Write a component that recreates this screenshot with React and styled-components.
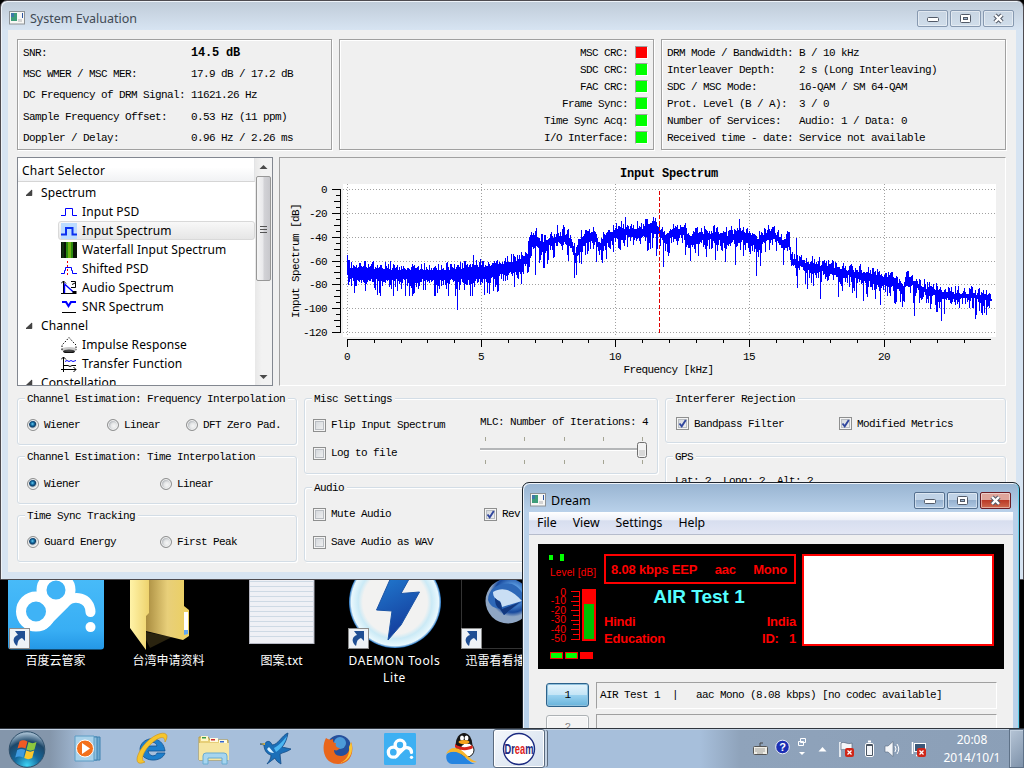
import React from 'react';
import styled, { createGlobalStyle, css } from 'styled-components';

const Global = createGlobalStyle`
  * { box-sizing: border-box; }
  html, body { margin: 0; padding: 0; background: #000; overflow: hidden; }
  svg { display: block; flex: none; }
  svg text { white-space: pre; }
`;

const mono = css`
  font-family: "Liberation Mono", "Noto Sans CJK SC", monospace;
  font-size: 11px;
  letter-spacing: -0.6px;
  white-space: pre;
  color: #000;
`;
const ui = css`
  font-family: "Noto Sans", "Noto Sans CJK SC", sans-serif;
  font-size: 12px;
  white-space: pre;
`;

const Desktop = styled.div`
  position: relative;
  width: 1024px;
  height: 768px;
  background: #000;
  overflow: hidden;
`;

/* ---------- window chrome ---------- */
const Win = styled.section`
  position: absolute;
  left: ${p => p.$x}px;
  top: ${p => p.$y}px;
  width: ${p => p.$w}px;
  height: ${p => p.$h}px;
  display: flex;
  flex-direction: column;
  border: 1px solid ${p => (p.$active ? '#20262e' : '#4e4b50')};
  border-radius: 7px 7px 0 0;
  padding: 0 ${p => (p.$active ? '6px 6px' : '7px 7px')};
  box-shadow: inset 1px 1px 0 #eef3f9${p => (p.$active ? ', inset -1px 0 0 #5fd3ee' : '')};
  background: ${p =>
    p.$active
      ? 'linear-gradient(#98b4d1 0, #b9d1ea 29px, #b9d1ea)'
      : 'linear-gradient(#bfcbd8 0, #d7e4f2 29px, #d7e4f2)'};
`;
const TitleBar = styled.header`
  ${ui}
  display: flex;
  align-items: center;
  flex: none;
  height: 29px;
  padding: 5px 0 0 1px;
  gap: 5px;
  font-size: 12.5px;
  color: ${p => (p.$active ? '#000' : '#414a54')};
`;
const TitleText = styled.span`
  flex: 1;
`;
const WinButtons = styled.div`
  display: flex;
  gap: 2px;
  padding-right: 2px;
`;
const WinButton = styled.div`
  width: 31px;
  height: 17px;
  border: 1px solid ${p => (p.$close ? '#6b1c24' : p.$active ? '#55708f' : '#8799b0')};
  border-radius: 2px;
  box-shadow: inset 0 0 0 1px rgba(255, 255, 255, 0.45);
  background: ${p =>
    p.$close
      ? 'linear-gradient(#dfa59b 0 45%, #bb3a26 50%, #cf6a4f)'
      : p.$active
      ? 'linear-gradient(#c0d3e7 0 45%, #96b1cf 50%, #b0c9e4)'
      : 'linear-gradient(#c8d5e3, #d0ddea)'};
  display: flex;
  align-items: center;
  justify-content: center;
`;
const AppIcon = () => (
  <svg width="16" height="14" viewBox="0 0 16 14">
    <rect x="0.5" y="0.5" width="15" height="12.5" fill="#f7f7f5" stroke="#8d9296" />
    <rect x="2" y="2" width="6" height="8" fill="#3e9d7a" />
    <rect x="2" y="2" width="3" height="4" fill="#3f78a8" />
    <rect x="13" y="2" width="1" height="5" fill="#2d55a0" />
    <rect x="9" y="8" width="4" height="3" fill="#d4d4d4" />
  </svg>
);
const Min = () => (
  <svg width="12" height="7" viewBox="0 0 12 7"><rect x="0.5" y="2.5" width="11" height="4" rx="1" fill="#fff" stroke="#525a68" /></svg>
);
const Max = () => (
  <svg width="11" height="9" viewBox="0 0 11 9"><rect x=".5" y=".5" width="10" height="8" rx="1" fill="#fff" stroke="#525a68" /><rect x="3.5" y="3.5" width="4" height="2" fill="#9db4cd" stroke="#525a68" /></svg>
);
const Close = () => (
  <svg width="13" height="11" viewBox="0 0 13 11">
    <path d="M3 2 10 9M10 2 3 9" stroke="#525a68" strokeWidth="4.4" />
    <path d="M3 2 10 9M10 2 3 9" stroke="#fff" strokeWidth="2.4" />
  </svg>
);
const Chrome = ({ title, active }) => (
  <TitleBar $active={active}>
    <AppIcon />
    <TitleText>{title}</TitleText>
    <WinButtons>
      <WinButton $active={active}><Min /></WinButton>
      <WinButton $active={active}><Max /></WinButton>
      <WinButton $active={active} $close={active}><Close /></WinButton>
    </WinButtons>
  </TitleBar>
);

/* ---------- evaluation window ---------- */
const Client = styled.main`
  flex: 1;
  min-height: 0;
  background: #f0f0f0;
  padding: 9px 10px 0 9px;
`;
const PanelRow = styled.div`
  display: grid;
  grid-template-columns: 315px 315px 1fr;
  gap: 7px;
  height: 111px;
`;
const Panel = styled.div`
  ${mono}
  border: 1px solid #a0a0a0;
  box-shadow: inset 1px 1px 0 #fff, 1px 1px 0 #fff;
  padding: ${p => p.$pad};
`;
const InfoRow = styled.div`
  display: grid;
  grid-template-columns: ${p => p.$label}px 1fr;
  align-items: center;
  height: ${p => p.$h}px;
`;
const Strong = styled.b`
  font-size: 12px;
  letter-spacing: -0.2px;
`;
const LedRow = styled.div`
  display: flex;
  justify-content: flex-end;
  align-items: center;
  gap: 7px;
  height: 17px;
`;
const Led = styled.i`
  width: 13px;
  height: 13px;
  border: 1px solid;
  border-color: #a0a0a0 #fff #fff #a0a0a0;
  background: ${p => (p.$bad ? '#f00' : '#0f0')};
`;

const MiddleRow = styled.div`
  display: grid;
  grid-template-columns: 256px 1fr;
  gap: 6px;
  height: 229px;
  margin-top: 7px;
`;
const Tree = styled.div`
  ${ui}
  letter-spacing: 0.1px;
  display: flex;
  min-height: 0;
  height: 229px;
  background: #fff;
  border: 1px solid #828790;
  overflow: hidden;
`;
const TreeBody = styled.div`
  flex: 1;
  min-width: 0;
`;
const TreeHeader = styled.div`
  height: 24px;
  line-height: 25px;
  padding-left: 4px;
  margin-bottom: 1px;
  letter-spacing: 0.25px;
  background: linear-gradient(#fff 40%, #f1f2f4);
  border-bottom: 1px solid #d5d5d5;
  border-right: 1px solid #e3e4e6;
`;
const Category = styled.div`
  height: 19px;
  display: flex;
  align-items: center;
  gap: 8px;
  padding-left: 7px;
`;
const Leaf = styled.div`
  height: 19px;
  margin-left: 40px;
  display: flex;
  align-items: center;
  gap: 5px;
  padding-left: 2px;
  border: 1px solid ${p => (p.$on ? '#d9d9d9' : 'transparent')};
  border-radius: 3px;
  background: ${p => (p.$on ? 'linear-gradient(#f8f8f8, #e6e6e6)' : 'none')};
`;
const ScrollBar = styled.div`
  width: 17px;
  background: linear-gradient(90deg, #e8e8e8, #f2f2f2 40%, #f2f2f2);
  display: flex;
  flex-direction: column;
  align-items: center;
`;
const Thumb = styled.div`
  width: 15px;
  height: 105px;
  margin: 0 0 auto;
  border: 1px solid #979797;
  border-radius: 2px;
  background: linear-gradient(90deg, #f5f5f5, #e9e9eb 45%, #d2d2d6 55%, #c8c8cc);
  display: flex;
  align-items: center;
  justify-content: center;
`;
const Arrow = ({ down }) => (
  <svg width="15" height="18" viewBox="0 0 15 18">
    <path d={down ? 'M3.5 8h8l-4 4z' : 'M3.5 11h8l-4-4z'} fill="#4a4a4a" />
  </svg>
);
const Triangle = () => (
  <svg width="8" height="8" viewBox="0 0 8 8"><path d="M6.8 1v5.5H1z" fill="#444" stroke="#222" strokeWidth=".7" /></svg>
);

const B = '#0000ff';
const leafIcons = {
  psd: <path d="M0 11.5H4.5V4.5H11.5V11.5H16" stroke={B} fill="none" />,
  input: (
    <>
      <rect width="16" height="16" fill="#bcdcff" />
      <path d="M0 11.500H5V5H11.5V11.500H16" stroke="#0a30f0" strokeWidth="2" fill="none" />
    </>
  ),
  waterfall: (
    <>
      <rect width="16" height="16" fill="#0a1408" />
      <rect x="1" width="2" height="16" fill="#123012" />
      <rect x="5" width="7" height="16" fill="#2c8a10" />
      <rect x="7" width="3" height="16" fill="#70b414" />
    </>
  ),
  shifted: (
    <>
      <path d="M0 12.5H3.500V9.500H4.500V6.500H10.500V9.500H11.500V12.500H16" stroke={B} fill="none" />
      <path d="M6.500 0V16" stroke="#e00" strokeDasharray="2 2" fill="none" />
    </>
  ),
  audio: (
    <>
      <path d="M2.5 14V1M0 3.500 2.500 1 5 3.500M0 13.500H15M10 1.500h4.500v6H10M11 4.500l4-2" stroke="#000" fill="none" />
      <path d="M3 3.500 14 13.500M3.500 5V13" stroke={B} strokeWidth="1.400" fill="none" />
      <path d="M11.500 11h4v3h-4z" fill="#000" />
    </>
  ),
  snr: (
    <>
      <path d="M1 3H5L7.500 7 10 3H15" stroke={B} strokeWidth="2.200" fill="none" />
      <path d="M1 13.500H15" stroke="#000" />
    </>
  ),
  impulse: (
    <>
      <ellipse cx="8" cy="14.500" rx="6" ry="2" fill="#111" />
      <ellipse cx="8" cy="12.500" rx="8" ry="2.500" fill="#888" opacity=".45" />
      <path d="M1 13V8L4 5 8 0.500 12 5 15 8V13" stroke="#000" strokeDasharray="1.500 1.500" fill="none" />
    </>
  ),
  transfer: (
    <>
      <path d="M2.500 16V1M0 3.500 2.500 1 5 3.500M0 13.500H15M12.500 11 15 13.500 12.500 16M3 9.500h4l2 1 2-1h4" stroke="#000" fill="none" />
      <path d="M4 5.500l2 -1 2 1 2-1 2 1 3-1" stroke={B} fill="none" />
    </>
  ),
};
const LeafIcon = ({ kind }) => (
  <svg width="16" height="16" viewBox="0 0 16 16">{leafIcons[kind]}</svg>
);

const ChartFrame = styled.div`
  height: 229px;
  border: 1px solid;
  border-color: #a0a0a0 #fff #fff #a0a0a0;
  overflow: hidden;
`;

/* ---------- spectrum trace ---------- */
const envelope = [
  [347, 258, 276], [349, 266, 280], [355, 267, 280], [375, 267, 281], [408, 268, 281], [441, 268, 281],
  [475, 266, 281], [492, 265, 279], [508, 261, 273], [520, 258, 270], [527, 252, 262],
  [529, 236, 252], [535, 233, 246], [540, 240, 252], [543, 240, 254], [549, 237, 247],
  [562, 233, 243], [570, 236, 247], [575, 251, 262], [580, 237, 251], [588, 230, 242], [595, 234, 244],
  [598, 244, 252], [603, 237, 247], [610, 231, 242], [615, 229, 239], [625, 227, 237], [640, 227, 240],
  [653, 221, 232], [659, 226, 237], [665, 234, 245], [673, 228, 237], [683, 227, 237], [690, 236, 246],
  [700, 232, 242], [713, 231, 241], [727, 234, 244], [740, 229, 240], [757, 237, 247], [770, 230, 240],
  [777, 234, 242], [783, 241, 250], [786, 235, 245], [789, 234, 249], [791, 256, 264], [803, 261, 269],
  [827, 264, 274], [847, 269, 277], [873, 272, 284], [893, 278, 288], [903, 284, 291], [906, 272, 285], [912, 279, 287],
  [927, 287, 295], [950, 292, 300], [973, 292, 300], [992, 297, 302],
];
const spikes = {
  347: [255, 275], 354: [266, 293], 377: [265, 295], 434: [267, 296], 435: [266, 296], 457: [265, 310], 473: [255, 283],
  487: [266, 293], 498: [264, 291], 535: [231, 275], 557: [225, 246], 563: [225, 245], 574: [243, 278], 625: [217, 240],
  656: [222, 256], 663: [232, 267], 690: [236, 261], 715: [232, 260], 725: [232, 262], 735: [230, 265], 739: [219, 243],
  756: [236, 276], 760: [235, 266], 796: [238, 276], 797: [255, 288], 807: [262, 289], 820: [266, 299], 838: [267, 297],
  856: [270, 298], 863: [272, 301], 880: [275, 305], 902: [284, 307], 914: [281, 316], 941: [290, 321], 975: [290, 319],
  982: [293, 315],
};
function trace() {
  let seed = 7331;
  const rnd = () => {
    seed = (seed * 1103515245 + 12345) % 2147483648;
    return seed / 2147483648;
  };
  let k = 0;
  let d = '';
  for (let x = 347; x < 992; x++) {
    while (k < envelope.length - 2 && x >= envelope[k + 1][0]) k++;
    const [x0, a0, b0] = envelope[k];
    const [x1, a1, b1] = envelope[k + 1];
    const t = (x - x0) / (x1 - x0);
    const up = rnd();
    const down = rnd();
    let top = Math.round(a0 + (a1 - a0) * t + 2.5 - up * 6 - up * up * up * 3);
    let bottom = Math.round(b0 + (b1 - b0) * t - 2 + Math.min(17, -Math.log(1 - down * 0.98) * 6.2));
    if (spikes[x]) [top, bottom] = spikes[x];
    d += `M${x + 0.5} ${top}V${bottom}`;
  }
  return d;
}
const spectrumPath = trace();
const kx = k => Math.round(347 + k * 26.83) + 0.5;
const dy = v => Math.round(189 - v * 1.192) + 0.5;
const range = n => Array.from({ length: n }, (_, i) => i);

const ChartLabel = styled.text`
  font-family: "Liberation Mono", monospace;
  font-size: ${p => (p.$title ? 12 : 11)}px;
  font-weight: ${p => (p.$title ? 700 : 400)};
  letter-spacing: ${p => (p.$title ? -0.2 : -0.6)}px;
  fill: #000;
`;

const SpectrumChart = () => (
  <svg width="725" height="227" viewBox="280 158 725 227" shapeRendering="crispEdges">
    <rect x="343" y="184" width="653" height="153" fill="#fff" />
    <g stroke="#a0a0a0" strokeDasharray="1 2">
      {range(7).map(i => <path key={i} d={`M343 ${dy(-20 * i)}H996`} />)}
      {range(5).map(i => <path key={i} d={`M${kx(5 * i)} 184V337`} />)}
    </g>
    <path d={spectrumPath} stroke="#0000ff" fill="none" />
    <path d="M659.500 191V333" stroke="#e00000" strokeDasharray="4 2" />
    <g stroke="#000">
      <path d="M340.500 189V333M347 339.500H991" />
      {range(25).map(i => (
        <path key={i} d={`M${i % 4 === 0 ? 332 : i % 2 === 0 ? 334 : 336} ${dy(-5 * i)}H341`} />
      ))}
      {range(24).map(i => <path key={i} d={`M${kx(i)} 339V${i % 5 === 0 ? 347 : 343}`} />)}
    </g>
    {range(7).map(i => (
      <ChartLabel key={i} x="327" y={dy(-20 * i) + 3} textAnchor="end">{String(-20 * i)}</ChartLabel>
    ))}
    {range(5).map(i => (
      <ChartLabel key={i} x={kx(5 * i) - 0.5} y="360" textAnchor="middle">{5 * i}</ChartLabel>
    ))}
    <ChartLabel $title x="669" y="177" textAnchor="middle">Input Spectrum</ChartLabel>
    <ChartLabel x="668.500" y="373" textAnchor="middle">Frequency [kHz]</ChartLabel>
    <ChartLabel transform="translate(299 261) rotate(-90)" textAnchor="middle">Input Spectrum [dB]</ChartLabel>
  </svg>
);

/* ---------- settings groups ---------- */
const SettingsRow = styled.div`
  display: grid;
  grid-template-columns: 280px 354px 1fr;
  gap: 7px;
  margin-top: 12px;
  height: 164px;
`;
const Column = styled.div`
  display: flex;
  flex-direction: column;
  gap: ${p => p.$gap}px;
`;
const Group = styled.div`
  ${mono}
  height: ${p => p.$h}px;
  flex: none;
  border: 1px solid #d3dde6;
  border-radius: 3px;
  box-shadow: inset 1px 1px 0 #fff, 1px 1px 0 #fff;
`;
const Legend = styled.div`
  width: max-content;
  height: 14px;
  line-height: 14px;
  margin: -7px 0 0 7px;
  padding: 0 3px 0 2px;
  background: #f0f0f0;
`;
const Options = styled.div`
  display: grid;
  grid-template-columns: ${p => p.$cols};
  padding: ${p => p.$pad};
  grid-auto-rows: ${p => p.$row || 17}px;
`;
const Option = styled.div`
  display: flex;
  align-items: center;
  gap: 5px;
`;
const Dot = styled.i`
  width: 12px;
  height: 12px;
  border-radius: 50%;
  border: 1px solid #8e8f8f;
  box-shadow: inset 0 0 0 1px #f4f4f4;
  background: ${p =>
    p.$on
      ? 'radial-gradient(circle at 45% 40%, #6fd0f2 0, #1b78ae 1.5px, #0b3b66 3px, #b9c2c8 4px, #eee 5px)'
      : 'radial-gradient(circle at 60% 60%, #f6f6f6 0, #e3e5e6 3px, #b9bdc1 5px)'};
`;
const BoxMark = styled.i`
  width: 13px;
  height: 13px;
  border: 1px solid #8e8f8f;
  box-shadow: inset 0 0 0 1px #f4f4f4, inset 0 0 0 2px #b9bdc2;
  background: linear-gradient(135deg, #d0d4d9, #f4f4f4);
`;
const Check = ({ on, children }) => (
  <Option>
    <BoxMark>
      {on && (
        <svg width="11" height="11" viewBox="0 0 11 11">
          <path d="M2.500 5.500 4.700 8.300 8.800 2" stroke="#31479e" strokeWidth="1.900" fill="none" />
        </svg>
      )}
    </BoxMark>
    <span>{children}</span>
  </Option>
);
const Radio = ({ on, children }) => (
  <Option><Dot $on={on} /><span>{children}</span></Option>
);
const MiscBody = styled.div`
  display: flex;
  justify-content: space-between;
  padding-right: 9px;
`;
const SliderBox = styled.div`
  padding-top: 10px;
  display: flex;
  flex-direction: column;
  gap: 5px;
`;
const Slider = () => (
  <svg width="168" height="34" viewBox="480 433 168 34" shapeRendering="crispEdges">
    <rect x="480" y="448" width="162" height="2" fill="#b4b6b8" />
    <rect x="480" y="450" width="162" height="1" fill="#fff" />
    {[485, 524, 564, 603, 642].map(x => (
      <path key={x} d={`M${x + 0.5} 437V441M${x + 0.5} 460V464`} stroke="#a5a594" />
    ))}
    <rect x="637.500" y="442.500" width="9" height="15" rx="2" fill="#f3f3f3" stroke="#6f6f6f" shapeRendering="auto" />
    <rect x="639" y="450" width="6" height="6" fill="#d8d8d8" />
  </svg>
);
const GpsLine = styled.div`
  padding: 11px 0 0 9px;
`;

/* ---------- receiver window ---------- */
const Menu = styled.nav`
  ${ui}
  font-size: 12.3px;
  display: flex;
  gap: 16px;
  flex: none;
  height: 23px;
  line-height: 21px;
  padding-left: 8px;
  background: linear-gradient(#fff 0, #eef1f9 35%, #d7deef 40%, #e2e6f4);
  border-bottom: 1px solid #b6bccc;
`;
const DreamClient = styled.main`
  flex: 1;
  background: #f0f0f0;
  padding: 9px 9px 0;
`;
const Display = styled.div`
  display: flex;
  height: 125px;
  background: #000;
  color: #f00;
  font: bold 13px "Liberation Sans", sans-serif;
  letter-spacing: -0.2px;
  white-space: pre;
`;
const Info = styled.div`
  width: 192px;
  margin: 10px 6px 0 2px;
`;
const Codec = styled.div`
  display: flex;
  justify-content: space-between;
  align-items: center;
  height: 30px;
  border: 2px solid #f00;
  padding: 1px 7px 0 5px;
`;
const Station = styled.div`
  height: 25px;
  line-height: 25px;
  font-size: 19px;
  letter-spacing: 0;
  text-align: center;
  color: #5ff;
  margin-bottom: 4px;
  padding-right: 2px;
`;
const Pair = styled.div`
  display: flex;
  justify-content: space-between;
  height: 17px;
  line-height: 17px;
`;
const Slide = styled.div`
  width: 192px;
  height: 92px;
  margin-top: 10px;
  background: #fff;
  border: 2px solid #f00;
`;
const MeterText = styled.text`
  font-family: "Liberation Sans", sans-serif;
  font-weight: 400;
  letter-spacing: 0;
  font-size: ${p => p.$size}px;
  fill: #f00;
`;
const Meter = () => (
  <svg width="64" height="125" viewBox="538 544 64 125" shapeRendering="crispEdges">
    <path d="M549 555h4v5h-4zM560 554h4v7h-4z" fill="#0f0" />
    <MeterText $size={10} x="550" y="576" textLength="46">Level [dB]</MeterText>
    {[592, 600.5, 610, 619.500, 629, 638].map((y, i) => (
      <MeterText key={i} $size={10.5} x="566" y={y + 3.5} textAnchor="end">{String(i * -10)}</MeterText>
    ))}
    <path d="M579.500 591V640" stroke="#f00" />
    {range(11).map(i => (
      <path key={i} d={`M${i % 2 ? 573 : 571} ${Math.round(591 + i * 4.750) + 0.500}H580`} stroke="#f00" />
    ))}
    <rect x="582" y="589" width="14" height="52" fill="#f00" />
    <rect x="584" y="604" width="10" height="35" fill="#00c000" />
    {[550, 565, 580].map(x => <rect key={x} x={x} y="652" width="13" height="7" fill="#f00" />)}
    {[551, 566].map(x => <rect key={x} x={x} y="653" width="11" height="5" fill="#0f0" />)}
  </svg>
);
const ServiceRow = styled.div`
  ${mono}
  display: grid;
  grid-template-columns: 43px 401px;
  gap: 7px;
  padding-left: 8px;
  margin-top: ${p => p.$top}px;
  height: 26px;
`;
const ServiceButton = styled.div`
  height: 24px;
  margin-top: 1px;
  line-height: 23px;
  text-align: center;
  border: 1px solid ${p => (p.$on ? '#2c628b' : '#adb2b5')};
  border-radius: 3px;
  color: ${p => (p.$on ? '#000' : '#838383')};
  background: ${p =>
    p.$on ? 'linear-gradient(#e5f4fc 0, #c4e5f6 48%, #98d1ef 52%, #68b3db)' : '#f4f4f4'};
  box-shadow: inset 0 0 0 1px ${p => (p.$on ? '#8fc0dc' : '#fcfcfc')};
`;
const ServiceText = styled.div`
  border: 1px solid;
  border-color: #a0a0a0 #fff #fff #a0a0a0;
  line-height: 25px;
  padding-left: 3px;
`;

/* ---------- desktop icons ---------- */
const IconRow = styled.div`
  display: flex;
  padding-top: 554px;
  margin-left: -1px;
`;
const IconCell = styled.div`
  ${ui}
  flex: none;
  width: 113px;
  display: flex;
  flex-direction: column;
  align-items: center;
  gap: 2px;
  text-align: center;
  line-height: 17px;
  letter-spacing: ${p => (p.$latin ? 0.6 : 0)}px;
  color: #fff;
`;
const Shortcut = ({ x }) => (
  <g>
    <rect x={x + 0.5} y="628.500" width="20" height="20" fill="#eef2f6" stroke="#8b8b8b" />
    <path d={`M${x + 8} 646C${x + 2} 641 ${x + 5} 636 ${x + 9} 635L${x + 6} 631H${x + 16}V641L${x + 13} 638C${x + 8} 640 ${x + 9} 643 ${x + 8} 646Z`} fill="#1f4e93" />
  </g>
);
const Cloud = ({ blue }) => (
  <g fill="none" stroke="#fff" strokeWidth="10" strokeLinecap="round">
    <path d="M22 606 38 592 56 604 46 620Z" fill="#fff" stroke="none" />
    <path d="M43 625 65 603C73 594 90 597 90.500 612" />
    <circle cx="36" cy="611.500" r="15" fill={blue} />
    <circle cx="56" cy="590" r="14.500" fill={blue} />
    <path d="M90.500 627v.1" />
  </g>
);
const BigIcons = {
  baidu: (
    <svg width="96" height="96" viewBox="8 554 96 96">
      <defs><linearGradient id="bd" x2="0" y2="1"><stop stopColor="#4fc1fb" /><stop offset=".8" stopColor="#38aef4" /><stop offset="1" stopColor="#2497e6" /></linearGradient></defs>
      <rect x="8" y="554" width="96" height="95.500" rx="3" fill="url(#bd)" />
      <Cloud blue="#3fb3f6" />
      <Shortcut x={9} />
    </svg>
  ),
  folder: (
    <svg width="96" height="96" viewBox="121 554 96 96">
      <defs>
        <linearGradient id="fa"><stop stopColor="#fff3a8" /><stop offset="1" stopColor="#eed36e" /></linearGradient>
        <linearGradient id="fb"><stop stopColor="#a98c3f" /><stop offset=".5" stopColor="#e8cf7a" /><stop offset="1" stopColor="#ecd060" /></linearGradient>
      </defs>
      <path d="M146 632V640L150 648 172 637Z" fill="#2a230f" />
      <path d="M146 570H184V606L189 610V636L183 640 146 631Z" fill="url(#fb)" />
      <path d="M184 612h4v21l-4 2z" fill="#fff" /><path d="M184 630h4v4l-4 1z" fill="#62a7ef" />
      <path d="M130 560H149V613L146 616V650L130 628Z" fill="url(#fa)" />
    </svg>
  ),
  text: (
    <svg width="96" height="96" viewBox="234 554 96 96">
      <rect x="249.500" y="560" width="64.500" height="83.500" fill="#eff0f5" stroke="#b7b9c4" />
      {range(12).map(i => <path key={i} d={`M250 ${581.500 + i * 5}H314`} stroke="#ced9e4" />)}
    </svg>
  ),
  daemon: (
    <svg width="96" height="96" viewBox="347 554 96 96">
      <defs>
        <linearGradient id="da" x2=".3" y2="1"><stop stopColor="#2384d8" /><stop offset="1" stopColor="#143d9c" /></linearGradient>
        <radialGradient id="db"><stop offset=".7" stopColor="#f2f2f1" /><stop offset=".8" stopColor="#cbeaf6" /><stop offset=".95" stopColor="#e9f8fd" /><stop offset="1" stopColor="#1d6fc0" /></radialGradient>
      </defs>
      <circle cx="395" cy="602" r="46" fill="url(#db)" />
      <path d="M396 566 413 572 401 593.500 419.500 592 401 625 388 640 392 611 376.500 610Z" fill="url(#da)" stroke="#1b54a6" />
      <Shortcut x={348} />
    </svg>
  ),
  thunder: (
    <svg width="96" height="96" viewBox="460 554 96 96">
      <defs><radialGradient id="th" cx=".6" cy=".35"><stop stopColor="#e8f4ff" /><stop offset=".4" stopColor="#5b9be0" /><stop offset=".8" stopColor="#17489c" /><stop offset="1" stopColor="#8fa6c4" /></radialGradient></defs>
      <path d="M461.500 554V648.500H556" stroke="#333" fill="none" />
      <circle cx="508" cy="601" r="22.500" fill="url(#th)" />
      <path d="M488 600C488 588 500 582 512 584 522 588 526 598 522 602L504 615 500 609C494 608 490 606 488 600Z" fill="#2e68b8" />
      <path d="M493 592C503 586 512 590 522 601L502 607 500 601C496 600 493 597 493 592Z" fill="#c9def4" />
      <path d="M495 598 501 603 502 609 520 602 504 615 500 609C496 607 495 603 495 598Z" fill="#12387f" />
      <Shortcut x={461} />
    </svg>
  ),
};

/* ---------- taskbar ---------- */
const Taskbar = styled.footer`
  position: absolute;
  left: 0;
  top: 728px;
  width: 1024px;
  height: 40px;
  border-top: 1px solid #30363e;
  box-shadow: inset 0 1px 0 #c4d3e4;
  background: linear-gradient(90deg, #8496ab 0, #8496ab 50px, #a7bfdb 85px, #a7bfdb 700px, #8fa3bb 740px, #8b9fb7 1024px);
  display: flex;
  align-items: center;
`;
const TaskItem = styled.div`
  width: ${p => p.$w || 62}px;
  height: 39px;
  flex: none;
  display: flex;
  align-items: center;
  justify-content: center;
`;
const TaskActive = styled(TaskItem)`
  border: 1px solid #5b6b7f;
  border-radius: 3px;
  background: linear-gradient(135deg, #f4f7fb, #d3dfed);
  box-shadow: inset 0 0 0 1px #fff, 3px 0 0 -1px #c5d3e3, 4px 0 0 -1px #5b6b7f;
`;
const Tray = styled.div`
  margin-left: auto;
  display: flex;
  align-items: center;
  height: 39px;
`;
const TrayIcons = styled.div`
  display: flex;
  align-items: center;
  gap: ${p => p.$gap}px;
  margin-right: ${p => p.$after}px;
`;
const Clock = styled.div`
  ${ui}
  color: #fff;
  width: 74px;
  text-align: center;
  line-height: 18px;
`;
const Peek = styled.div`
  width: 15px;
  height: 39px;
  border: 1px solid #5e7187;
  box-shadow: inset 1px 1px 0 #c2d0df;
  background: linear-gradient(135deg, #b6c5d6, #7e92aa);
`;

const Start = () => (
  <svg width="38" height="38" viewBox="0 0 38 38">
    <defs><radialGradient id="st" cx=".5" cy=".95" r=".9"><stop stopColor="#3ed4f5" /><stop offset=".4" stopColor="#15689b" /><stop offset=".75" stopColor="#1d4769" /><stop offset="1" stopColor="#9fb8cc" /></radialGradient></defs>
    <circle cx="19" cy="19.500" r="17.800" fill="url(#st)" stroke="#2f506b" />
    <path d="M11.500 11.500c3-2 5-1.500 8 0l-2 7c-3-1.500-5-1.500-8 0z" fill="#ee5a24" />
    <path d="M20.500 12c3 1.500 5 1.500 8 0l-2 7.500c-3 1.500-5 1.500-8 0z" fill="#8cc63e" />
    <path d="M9.200 20c3-1.500 5-1.500 8 0l-2 7.500c-3-1.500-5-1.500-8 0z" fill="#3f9be0" />
    <path d="M18.200 20.500c3 1.500 5 1.500 8 0l-2 7.500c-3 1.500-5 1.500-8 0z" fill="#fcc82d" />
  </svg>
);
const Player = () => (
  <svg width="30" height="30" viewBox="0 0 30 30">
    <path d="M8 3h19v23H8z" fill="#6ea9cf" stroke="#3f82b0" /><path d="M5 3h19v23H5z" fill="#8fc0de" stroke="#3f82b0" /><path d="M2 2h19v25H2z" fill="#a9d2ea" stroke="#5d9cc4" />
    <circle cx="12" cy="14.500" r="8.500" fill="#f3701c" stroke="#fff" /><path d="M9 9v11l8-5.500z" fill="#fff" />
  </svg>
);
const Explorer = () => (
  <svg width="32" height="32" viewBox="0 0 32 32">
    <path d="M1 4h9l2 3h18v20H1z" fill="#e7cf78" stroke="#b89c44" /><path d="M3 3h7v5H3z" fill="#fff6c8" /><path d="M12 5h8v4h-8zM21 7h8v4h-8z" fill="#fffbe2" />
    <path d="M4 4h4v1.500H4z" fill="#3a9a4a" /><path d="M13 6h4v1.500h-4z" fill="#c33" /><path d="M22 8h4v1.500h-4z" fill="#36c" />
    <path d="M1 10h30v17H1z" fill="#f6e6a2" /><path d="M5 31V23q0-3 3-3h18q3 0 3 3v8h-5v-6H10v6z" fill="#a6d5ef" stroke="#69acd2" />
  </svg>
);
const IE = () => (
  <svg width="32" height="34" viewBox="0 0 32 34">
    <path d="M29 21C26 31 5 31 4 17 5 4 27 2 29 19H12C13 25 20 25 21 21ZM12 14H21C20 9 13 9 12 14Z" fill="#1e7fcb" stroke="#0f5291" strokeWidth=".8" fillRule="evenodd" />
    <path d="M9 30C-2 35-1 24 8 13S30-2 31 4c0 3-1 4-2 6 0-7-6-5-13 1S3 28 9 30Z" fill="#f6c52d" stroke="#cf9112" strokeWidth=".6" />
  </svg>
);
const Bird = () => (
  <svg width="34" height="34" viewBox="0 0 34 34">
    <path d="M1 12l5-.5C8 8 12 9 13 13c6 0 10-10 16-12-1 6-3 11-6 14l9 2c-4 3-7 3-11 5l1 10c-3-2-5-3-6-6l-8 6c3-4 4-6 4-9-5-1-7-6-7-10z" fill="#1c6fb8" stroke="#154d86" strokeWidth=".8" />
    <path d="M15 16C21 13 26 6 28 4c-2 7-5 12-11 16z" fill="#4cb6f2" /><path d="M1 12l5-1v2z" fill="#e5b338" /><path d="M8 17c2 3 4 4 7 4l-5-6z" fill="#d7f0ff" />
  </svg>
);
const Firefox = () => (
  <svg width="32" height="32" viewBox="0 0 32 32">
    <circle cx="17" cy="14" r="12" fill="#254f9c" /><circle cx="18" cy="10" r="6" fill="#4d9ad8" />
    <path d="M4 5C-1 14 1 31 16 31S32 15 29 9c-1 9-4 14-10 14-5 0-7-3-7-6 3 1 4 0 6-2-4 0-5-3-4-5-3 0-3-2-3-4-2 1-4 1-7-1z" fill="#e9661b" />
    <path d="M29 9c3 8 0 19-11 21 7-3 10-9 9-16z" fill="#fbc633" />
  </svg>
);
const PanIcon = () => (
  <svg width="32" height="32" viewBox="8 554 96 96"><rect x="8" y="554" width="96" height="96" rx="4" fill="#3db0f3" /><Cloud blue="#3db0f3" /></svg>
);
const QQ = () => (
  <svg width="34" height="34" viewBox="0 0 34 34">
    <ellipse cx="19" cy="13" rx="8.500" ry="12" fill="#161616" /><ellipse cx="22" cy="18" rx="7" ry="7" fill="#fff" stroke="#161616" />
    <ellipse cx="17" cy="6" rx="2" ry="2.500" fill="#fff" /><ellipse cx="21.500" cy="6" rx="2" ry="2.500" fill="#fff" />
    <ellipse cx="19" cy="10" rx="5.500" ry="2" fill="#f7a41d" /><path d="M10 12c5 4 13 4 17 1l1 3c-5 3-13 3-18-1z" fill="#d8261c" />
    <path d="M2 22c8-6 15 0 21 6 4 3 6 4 8 4H7C2 32 0 25 2 22z" fill="#2584e0" /><path d="M1 22c3-6 8-7 13-5 7 3 9 10 18 13-5 1-8-1-12-5-6-5-12-7-19-3z" fill="#f7b52c" />
  </svg>
);
const DreamText = styled.text`
  font: bold 15px "Liberation Sans", sans-serif;
`;
const DreamLogo = () => (
  <svg width="34" height="34" viewBox="0 0 34 34">
    <circle cx="17" cy="17" r="15.500" fill="#fff" stroke="#1b2a80" strokeWidth="1.400" />
    <DreamText x="0" y="0" textAnchor="middle" transform="translate(17 22) scale(.62 1)" fill="#1b2a80">Dr<tspan fill="#e0221c">ea</tspan>m</DreamText>
  </svg>
);
const Keyboard = () => (
  <svg width="15" height="14" viewBox="0 0 15 14"><rect x=".5" y="4.500" width="14" height="8" rx="1" fill="#f0eee6" stroke="#565656" /><path d="M2.500 7h10M2.500 9h10M4.500 11h6" stroke="#555" strokeDasharray="1 1" /><path d="M7 4V1h3" stroke="#444" fill="none" /></svg>
);
const HelpText = styled.text`font: bold 11px "Liberation Sans", sans-serif; fill: #fff;`;
const Help = () => (
  <svg width="15" height="20" viewBox="0 0 15 20"><circle cx="7.500" cy="8" r="6.800" fill="#1b2fb4" stroke="#e8ecf6" /><HelpText x="4.300" y="12">?</HelpText></svg>
);
const Restore = () => (
  <svg width="10" height="24" viewBox="0 0 10 24"><path d="M3.500 1.500h5v4h-5zM1.500 4.500h5v4h-5z" fill="#8fa5c0" stroke="#fff" /><path d="M2 15h6l-3 3z" fill="#fff" /></svg>
);
const Up = () => <svg width="9" height="6" viewBox="0 0 9 6"><path d="M.5 5.500h8L4.500 1z" fill="#fff" /></svg>;
const Flag = () => (
  <svg width="17" height="18" viewBox="0 0 17 18"><path d="M2 2v15" stroke="#fff" strokeWidth="1.500" /><path d="M3 3c4-2 6 2 11 0v7c-5 2-7-2-11 0z" fill="#f4f6f9" stroke="#59697c" strokeWidth=".7" /><rect x="7" y="8" width="9" height="9" rx="2" fill="#cf2618" /><path d="M9.500 10.500l4 4M13.500 10.500l-4 4" stroke="#fff" strokeWidth="1.300" /></svg>
);
const Battery = () => (
  <svg width="11" height="18" viewBox="0 0 11 18"><rect x="1.500" y="3.500" width="8" height="13" rx="1.500" fill="#4a5562" stroke="#fff" /><path d="M4 1.500h3" stroke="#fff" strokeWidth="2" /><rect x="3" y="6" width="5" height="9" fill="#f4f6f9" /></svg>
);
const Speaker = () => (
  <svg width="17" height="18" viewBox="0 0 17 18"><path d="M1 6h3l5-4.500v15L4 12H1z" fill="#f4f6f9" stroke="#59697c" strokeWidth=".6" /><path d="M11 6q2 3 0 6M13 4q3.500 5 0 10" stroke="#fff" fill="none" /></svg>
);
const Network = () => (
  <svg width="17" height="18" viewBox="0 0 17 18"><rect x="4.500" y="3.500" width="11" height="8" fill="#3c5878" stroke="#fff" /><path d="M2.500 2v12M10 12v3M6 15.500h8" stroke="#fff" strokeWidth="1.500" /><rect x="7" y="8" width="9" height="9" rx="2" fill="#cf2618" /><path d="M9.500 10.500l4 4M13.500 10.500l-4 4" stroke="#fff" strokeWidth="1.300" /></svg>
);

/* ---------- data ---------- */
const signal = [
  ['MSC WMER / MSC MER:', '17.9 dB / 17.2 dB'],
  ['DC Frequency of DRM Signal:', '11621.26 Hz'],
  ['Sample Frequency Offset:', '0.53 Hz (11 ppm)'],
  ['Doppler / Delay:', '0.96 Hz / 2.26 ms'],
];
const leds = ['MSC CRC:', 'SDC CRC:', 'FAC CRC:', 'Frame Sync:', 'Time Sync Acq:', 'I/O Interface:'];
const modes = [
  ['DRM Mode / Bandwidth:', 'B / 10 kHz'],
  ['Interleaver Depth:', '2 s (Long Interleaving)'],
  ['SDC / MSC Mode:', '16-QAM / SM 64-QAM'],
  ['Prot. Level (B / A):', '3 / 0'],
  ['Number of Services:', 'Audio: 1 / Data: 0'],
  ['Received time - date:', 'Service not available'],
];
const tree = [
  ['Spectrum', [['psd', 'Input PSD'], ['input', 'Input Spectrum'], ['waterfall', 'Waterfall Input Spectrum'], ['shifted', 'Shifted PSD'], ['audio', 'Audio Spectrum'], ['snr', 'SNR Spectrum']]],
  ['Channel', [['impulse', 'Impulse Response'], ['transfer', 'Transfer Function']]],
  ['Constellation', []],
];

const Evaluation = () => (
  <Win $x={0} $y={0} $w={1024} $h={580}>
    <Chrome title="System Evaluation" />
    <Client>
      <PanelRow>
        <Panel $pad="2px 0 0 5px">
          <InfoRow $label={168} $h={21.4}><span>SNR:</span><Strong>14.5 dB</Strong></InfoRow>
          {signal.map(([a, b]) => <InfoRow key={a} $label={168} $h={21.4}><span>{a}</span><span>{b}</span></InfoRow>)}
        </Panel>
        <Panel $pad="4px 5px 0 0">
          {leds.map((l, i) => <LedRow key={l}><span>{l}</span><Led $bad={i === 0} /></LedRow>)}
        </Panel>
        <Panel $pad="4px 0 0 5px">
          {modes.map(([a, b]) => <InfoRow key={a} $label={132} $h={17}><span>{a}</span><span>{b}</span></InfoRow>)}
        </Panel>
      </PanelRow>
      <MiddleRow>
        <Tree>
          <TreeBody>
            <TreeHeader>Chart Selector</TreeHeader>
            {tree.map(([name, items]) => (
              <React.Fragment key={name}>
                <Category><Triangle /><span>{name}</span></Category>
                {items.map(([kind, label]) => (
                  <Leaf key={kind} $on={kind === 'input'}><LeafIcon kind={kind} /><span>{label}</span></Leaf>
                ))}
              </React.Fragment>
            ))}
          </TreeBody>
          <ScrollBar>
            <Arrow />
            <Thumb>
              <svg width="7" height="8" viewBox="0 0 7 8"><path d="M0 1.500h7M0 4.500h7M0 7.500h7" stroke="#555" /></svg>
            </Thumb>
            <Arrow down />
          </ScrollBar>
        </Tree>
        <ChartFrame><SpectrumChart /></ChartFrame>
      </MiddleRow>
      <SettingsRow>
        <Column $gap={11}>
          <Group $h={47}>
            <Legend>Channel Estimation: Frequency Interpolation</Legend>
            <Options $cols="80px 79px 1fr" $pad="10px 0 0 9px">
              <Radio on>Wiener</Radio><Radio>Linear</Radio><Radio>DFT Zero Pad.</Radio>
            </Options>
          </Group>
          <Group $h={48}>
            <Legend>Channel Estimation: Time Interpolation</Legend>
            <Options $cols="133px 1fr" $pad="11px 0 0 9px"><Radio on>Wiener</Radio><Radio>Linear</Radio></Options>
          </Group>
          <Group $h={47}>
            <Legend>Time Sync Tracking</Legend>
            <Options $cols="133px 1fr" $pad="10px 0 0 9px"><Radio on>Guard Energy</Radio><Radio>First Peak</Radio></Options>
          </Group>
        </Column>
        <Column $gap={13}>
          <Group $h={76}>
            <Legend>Misc Settings</Legend>
            <MiscBody>
              <Options $cols="160px" $row={28} $pad="5px 0 0 8px"><Check>Flip Input Spectrum</Check><Check>Log to file</Check></Options>
              <SliderBox><span>MLC: Number of Iterations: 4</span><Slider /></SliderBox>
            </MiscBody>
          </Group>
          <Group $h={75}>
            <Legend>Audio</Legend>
            <Options $cols="171px 1fr" $row={28} $pad="5px 0 0 8px">
              <Check>Mute Audio</Check><Check on>Rev</Check><Check>Save Audio as WAV</Check>
            </Options>
          </Group>
        </Column>
        <Column $gap={13}>
          <Group $h={45}>
            <Legend>Interferer Rejection</Legend>
            <Options $cols="163px 1fr" $pad="9px 0 0 10px"><Check on>Bandpass Filter</Check><Check on>Modified Metrics</Check></Options>
          </Group>
          <Group $h={106}>
            <Legend>GPS</Legend>
            <GpsLine>Lat: ?  Long: ?  Alt: ?</GpsLine>
          </Group>
        </Column>
      </SettingsRow>
    </Client>
  </Win>
);

const Receiver = () => (
  <Win $active $x={522} $y={482} $w={498} $h={286}>
    <Chrome title="Dream" active />
    <Menu><span>File</span><span>View</span><span>Settings</span><span>Help</span></Menu>
    <DreamClient>
      <Display>
        <Meter />
        <Info>
          <Codec><span>8.08 kbps EEP</span><span>aac</span><span>Mono</span></Codec>
          <Station>AIR Test 1</Station>
          <Pair><span>Hindi</span><span>India</span></Pair>
          <Pair><span>Education</span><span>ID:   1</span></Pair>
        </Info>
        <Slide />
      </Display>
      <ServiceRow $top={13}>
        <ServiceButton $on>1</ServiceButton>
        <ServiceText>AIR Test 1  |   aac Mono (8.08 kbps) [no codec available]</ServiceText>
      </ServiceRow>
      <ServiceRow $top={6}>
        <ServiceButton>2</ServiceButton>
        <ServiceText />
      </ServiceRow>
    </DreamClient>
  </Win>
);

export default function App() {
  return (
    <Desktop>
      <Global />
      <IconRow>
        <IconCell>{BigIcons.baidu}<span>百度云管家</span></IconCell>
        <IconCell>{BigIcons.folder}<span>台湾申请资料</span></IconCell>
        <IconCell>{BigIcons.text}<span>图案.txt</span></IconCell>
        <IconCell $latin>{BigIcons.daemon}<span>{'DAEMON Tools\nLite'}</span></IconCell>
        <IconCell>{BigIcons.thunder}<span>迅雷看看播放器</span></IconCell>
      </IconRow>
      <Evaluation />
      <Receiver />
      <Taskbar>
        <TaskItem $w={54}><Start /></TaskItem>
        <TaskItem $w={67}><Player /></TaskItem>
        <TaskItem><IE /></TaskItem>
        <TaskItem><Explorer /></TaskItem>
        <TaskItem><Bird /></TaskItem>
        <TaskItem><Firefox /></TaskItem>
        <TaskItem><PanIcon /></TaskItem>
        <TaskItem><QQ /></TaskItem>
        <TaskActive $w={52}><DreamLogo /></TaskActive>
        <Tray>
          <TrayIcons $gap={7} $after={7}><Keyboard /><Help /></TrayIcons>
          <TrayIcons $gap={11} $after={11}><Restore /><Up /></TrayIcons>
          <TrayIcons $gap={9} $after={8}><Flag /><Battery /><Speaker /><Network /></TrayIcons>
          <Clock>{'20:08\n2014/10/1'}</Clock>
          <Peek />
        </Tray>
      </Taskbar>
    </Desktop>
  );
}
